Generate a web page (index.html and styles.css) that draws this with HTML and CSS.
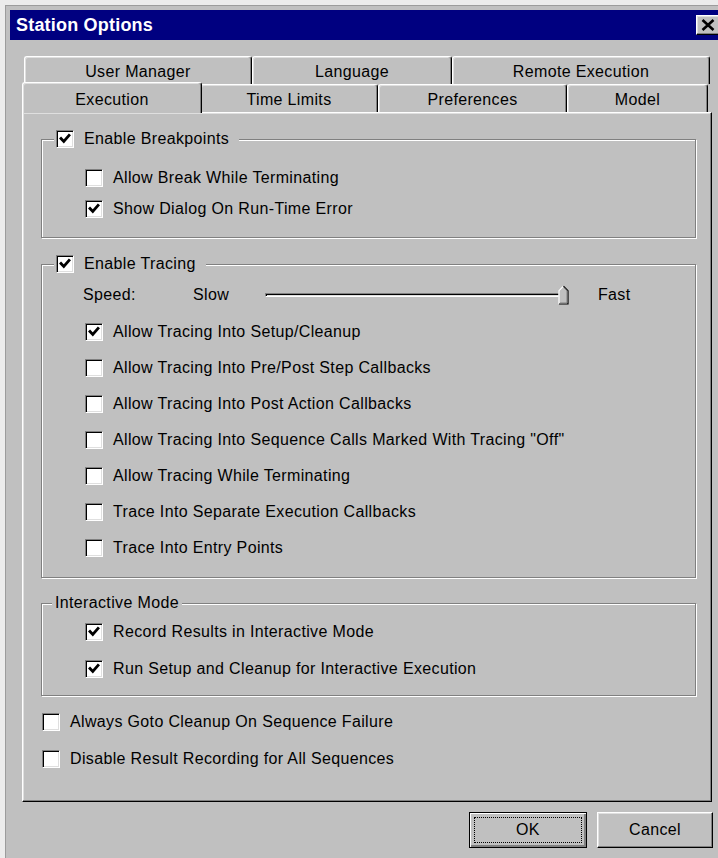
FILE: index.html
```html
<!DOCTYPE html>
<html lang="en">
<head>
<meta charset="utf-8">
<title>Station Options</title>
<link rel="stylesheet" href="styles.css">
</head>
<body>
<div class="window">
  <div class="titlebar">
    <span class="title">Station Options</span>
    <span class="close-btn">
      <svg width="14" height="12" viewBox="0 0 14 12"><path d="M1.5 1 L12.5 11 M12.5 1 L1.5 11" stroke="#000" stroke-width="2.6" fill="none"/></svg>
    </span>
  </div>

  <div class="client">
    <div class="tabstrip">
      <div class="tabrow tabrow-back">
        <div class="tab tab-user">User Manager</div>
        <div class="tab tab-lang">Language</div>
        <div class="tab tab-remote">Remote Execution</div>
      </div>
      <div class="tabrow tabrow-front">
        <div class="tab tab-exec tab-active">Execution</div>
        <div class="tab tab-time">Time Limits</div>
        <div class="tab tab-pref">Preferences</div>
        <div class="tab tab-model">Model</div>
      </div>
    </div>

    <div class="panel">
      <fieldset class="group group-break">
        <legend class="legend-check">
          <span class="checkbox checked"><svg viewBox="0 0 16 16"><polyline points="4,7.5 6.8,10.5 12,4.5" /></svg></span>
          <span>Enable Breakpoints</span>
        </legend>
        <div class="group-body body-break">
          <div class="row"><span class="checkbox"></span><span>Allow Break While Terminating</span></div>
          <div class="row"><span class="checkbox checked"><svg viewBox="0 0 16 16"><polyline points="4,7.5 6.8,10.5 12,4.5" /></svg></span><span>Show Dialog On Run-Time Error</span></div>
        </div>
      </fieldset>

      <fieldset class="group group-trace">
        <legend class="legend-check">
          <span class="checkbox checked"><svg viewBox="0 0 16 16"><polyline points="4,7.5 6.8,10.5 12,4.5" /></svg></span>
          <span>Enable Tracing</span>
        </legend>
        <div class="group-body body-trace">
          <div class="speed-row">
            <span class="speed-label">Speed:</span>
            <span class="slow-label">Slow</span>
            <span class="slider">
              <span class="track"></span>
              <svg class="thumb" width="11" height="20" viewBox="0 0 11 20">
                <polygon points="0.5,19.5 0.5,5.5 5.5,0.5 10.5,5.5 10.5,19.5" fill="#c0c0c0"/>
                <polyline points="1,19 1,5.7 5.5,1.2" stroke="#fff" stroke-width="1.2" fill="none"/>
                <polyline points="5.5,1.2 10,5.7 10,19 1,19" stroke="#000" stroke-width="1.2" fill="none"/>
                <polyline points="6,2.6 9,5.9 9,18 2,18" stroke="#808080" stroke-width="1" fill="none"/>
              </svg>
            </span>
            <span class="fast-label">Fast</span>
          </div>
          <div class="trace-list">
            <div class="row"><span class="checkbox checked"><svg viewBox="0 0 16 16"><polyline points="4,7.5 6.8,10.5 12,4.5" /></svg></span><span>Allow Tracing Into Setup/Cleanup</span></div>
            <div class="row"><span class="checkbox"></span><span>Allow Tracing Into Pre/Post Step Callbacks</span></div>
            <div class="row"><span class="checkbox"></span><span>Allow Tracing Into Post Action Callbacks</span></div>
            <div class="row"><span class="checkbox"></span><span>Allow Tracing Into Sequence Calls Marked With Tracing "Off"</span></div>
            <div class="row"><span class="checkbox"></span><span>Allow Tracing While Terminating</span></div>
            <div class="row"><span class="checkbox"></span><span>Trace Into Separate Execution Callbacks</span></div>
            <div class="row"><span class="checkbox"></span><span>Trace Into Entry Points</span></div>
          </div>
        </div>
      </fieldset>

      <fieldset class="group group-inter">
        <legend class="legend-text">Interactive Mode</legend>
        <div class="group-body body-inter">
          <div class="row"><span class="checkbox checked"><svg viewBox="0 0 16 16"><polyline points="4,7.5 6.8,10.5 12,4.5" /></svg></span><span>Record Results in Interactive Mode</span></div>
          <div class="row"><span class="checkbox checked"><svg viewBox="0 0 16 16"><polyline points="4,7.5 6.8,10.5 12,4.5" /></svg></span><span>Run Setup and Cleanup for Interactive Execution</span></div>
        </div>
      </fieldset>

      <div class="loose">
        <div class="row"><span class="checkbox"></span><span>Always Goto Cleanup On Sequence Failure</span></div>
        <div class="row"><span class="checkbox"></span><span>Disable Result Recording for All Sequences</span></div>
      </div>
    </div>

    <div class="button-row">
      <button class="btn btn-default"><span class="focus">OK</span></button>
      <button class="btn">Cancel</button>
    </div>
  </div>
</div>
</body>
</html>
```

FILE: styles.css
```css
html, body {
  margin: 0;
  padding: 0;
}

body {
  width: 718px;
  height: 858px;
  overflow: hidden;
  background: #eeeeee;
  font-family: "Liberation Sans", Arial, sans-serif;
  font-size: 16px;
  letter-spacing: 0.35px;
  color: #000;
}

/* Window frame */
.window {
  width: 710px;
  height: 853px;
  border-top: 5px solid #ececec;
  border-left: 5px solid #ececec;
  padding: 5px 0 0 5px;
  background: #c0c0c0;
  box-shadow: inset 1px 1px #9c9c9c;
}

/* Caption */
.titlebar {
  height: 30px;
  background: #000080;
  display: flex;
  align-items: center;
  justify-content: space-between;
  padding-left: 6px;
}

.title {
  color: #fff;
  font-weight: bold;
  font-size: 18px;
  letter-spacing: 0.2px;
}

.close-btn {
  width: 22px;
  height: 18px;
  margin-right: 0;
  background: #c0c0c0;
  border: 1px solid;
  border-color: #fff #000 #000 #fff;
  box-shadow: inset -1px -1px #808080, inset 1px 1px #dfdfdf;
  display: flex;
  align-items: center;
  justify-content: center;
}

.close-btn svg {
  display: block;
}

/* Client area */
.client {
  padding: 16px 0 0 12px;
}

/* Tabs */
.tabstrip {
  width: 690px;
}

.tabrow {
  display: flex;
  height: 28px;
}

.tabrow-back {
  padding-left: 2px;
}

.tabrow-front {
  align-items: flex-end;
}

.tab {
  box-sizing: border-box;
  height: 28px;
  display: flex;
  align-items: center;
  justify-content: center;
  background: #c0c0c0;
  border-top: 1px solid #fff;
  border-left: 1px solid #fff;
  border-right: 1px solid #000;
  border-radius: 3px 3px 0 0;
  box-shadow: inset -1px 0 #808080, inset 1px 1px #dfdfdf;
  padding-top: 2px;
}

.tab-user { width: 228px; }
.tab-lang { width: 200px; }
.tab-remote { width: 258px; }

.tab-exec { width: 180px; }
.tab-time { width: 178px; }
.tab-pref { width: 189px; }
.tab-model { width: 141px; }

.tab-active {
  position: relative;
  z-index: 2;
  height: 31px;
  margin-bottom: -1px;
  margin-right: -2px;
  padding-top: 3px;
  padding-bottom: 0;
}

/* Property page */
.panel {
  box-sizing: border-box;
  width: 690px;
  height: 690px;
  border: 1px solid;
  border-color: #fff #000 #000 #fff;
  box-shadow: inset -1px -1px #808080, inset 1px 1px #dfdfdf;
  padding: 16px 15px 0 18px;
  display: flex;
  flex-direction: column;
}

/* Etched group boxes */
.group {
  margin: 0;
  padding: 0;
  border: 1px solid #808080;
  box-shadow: inset 1px 1px #fff, 1px 1px #fff;
  min-inline-size: 0;
}

.group + .group {
  margin-top: 16px;
}

.group-inter {
  margin-top: 15px !important;
}

.legend-check {
  margin-left: 12px;
  padding: 0 10px 0 2px;
  height: 20px;
  display: flex;
  align-items: center;
  gap: 10px;
  background: #c0c0c0;
}

.legend-text {
  margin-left: 10px;
  padding: 0 3px 0 3px;
  height: 20px;
  line-height: 20px;
  background: #c0c0c0;
}

.group-body {
  padding-left: 43px;
}

.body-break {
  padding-top: 13px;
  padding-bottom: 13px;
}

.body-trace {
  padding-top: 9px;
  padding-bottom: 11px;
}

.body-inter {
  padding-top: 1px;
  padding-bottom: 8px;
  display: flex;
  flex-direction: column;
  gap: 1px;
}

.row {
  display: flex;
  align-items: center;
  gap: 10px;
  height: 31px;
  white-space: nowrap;
}

.trace-list .row,
.body-inter .row,
.loose .row {
  height: 36px;
}

.trace-list {
  margin-top: 7px;
}

.loose {
  margin-top: 8px;
  padding-left: 1px;
  display: flex;
  flex-direction: column;
  gap: 1px;
}

/* Check boxes */
.checkbox {
  box-sizing: border-box;
  flex: none;
  width: 18px;
  height: 18px;
  background: #fff;
  border: 1px solid;
  border-color: #808080 #fff #fff #808080;
  box-shadow: inset 1px 1px #000, inset -1px -1px #dfdfdf;
  display: flex;
  align-items: center;
  justify-content: center;
}

.checkbox svg {
  width: 16px;
  height: 16px;
  display: block;
}

.checkbox polyline {
  fill: none;
  stroke: #000;
  stroke-width: 2.8;
  stroke-linecap: square;
}

/* Speed slider */
.speed-row {
  display: flex;
  align-items: center;
  height: 24px;
  margin-left: -2px;
}

.speed-label { width: 110px; }
.slow-label { width: 72px; }

.slider {
  position: relative;
  width: 304px;
  height: 24px;
  display: flex;
  align-items: center;
}

.track {
  box-sizing: border-box;
  width: 302px;
  height: 4px;
  border: 1px solid;
  border-color: #808080 #fff #fff #808080;
  box-shadow: inset 1px 1px #000, inset -1px -1px #dfdfdf;
}

.thumb {
  position: absolute;
  right: 0;
  top: 2px;
}

.fast-label {
  margin-left: 29px;
}

/* Dialog buttons */
.button-row {
  width: 691px;
  display: flex;
  justify-content: flex-end;
  gap: 10px;
  margin-top: 10px;
}

.btn {
  box-sizing: border-box;
  width: 116px;
  height: 36px;
  margin: 0;
  padding: 0;
  font: inherit;
  letter-spacing: 0.35px;
  color: #000;
  background: #c0c0c0;
  border: 1px solid;
  border-color: #fff #000 #000 #fff;
  box-shadow: inset -1px -1px #808080, inset 1px 1px #dfdfdf;
  display: flex;
  align-items: center;
  justify-content: center;
}

.btn-default {
  width: 118px;
  border: 1px solid #000;
  box-shadow: inset 1px 1px #fff, inset -1px -1px #808080, inset -2px -2px #808080;
  padding: 4px;
}

.focus {
  box-sizing: border-box;
  width: 100%;
  height: 100%;
  border: 1px dotted #000;
  display: flex;
  align-items: center;
  justify-content: center;
}
```
